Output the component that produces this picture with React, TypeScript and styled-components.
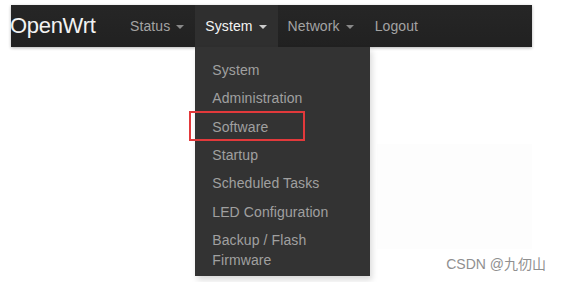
import React from "react";
import styled, { createGlobalStyle } from "styled-components";

const GlobalStyle = createGlobalStyle`
  html, body {
    margin: 0;
    padding: 0;
    background: #fff;
    font-family: "Liberation Sans", Arial, sans-serif;
  }
`;

const navItems = [
  { label: "Status", caret: true },
  { label: "System", caret: true, active: true },
  { label: "Network", caret: true },
  { label: "Logout", caret: false },
];

const systemMenu = [
  "System",
  "Administration",
  "Software",
  "Startup",
  "Scheduled Tasks",
  "LED Configuration",
  "Backup / Flash Firmware",
];

const App = () => {
  return (
    <Page>
      <GlobalStyle />
      <Navbar>
        <Brand>OpenWrt</Brand>
        <NavList>
          {navItems.map((item) => (
            <NavItem key={item.label} active={item.active}>
              {item.label}
              {item.caret && <Caret />}
              {item.active && (
                <Dropdown>
                  {systemMenu.map((entry) => (
                    <MenuItem key={entry} highlighted={entry === "Software"}>
                      {entry}
                    </MenuItem>
                  ))}
                </Dropdown>
              )}
            </NavItem>
          ))}
        </NavList>
      </Navbar>
      <Panel />
      <Watermark>CSDN @九仞山</Watermark>
    </Page>
  );
};

const Page = styled.div`
  position: relative;
  width: 561px;
  height: 282px;
  padding: 5px 0 0 11px;
  box-sizing: border-box;
  overflow: hidden;
`;

const Navbar = styled.nav`
  display: flex;
  align-items: stretch;
  width: 521px;
  height: 42px;
  background: linear-gradient(#262626, #212121);
  box-shadow: 0 1px 3px rgba(0, 0, 0, 0.3);
`;

const Brand = styled.div`
  display: flex;
  align-items: center;
  flex: 0 0 109px;
  margin-left: -1px;
  font-size: 22px;
  letter-spacing: -0.3px;
  color: #f2f2f2;
`;

const NavList = styled.ul`
  display: flex;
  margin: 0 0 0 1px;
  padding: 0;
  list-style: none;
`;

const NavItem = styled.li<{ active?: boolean }>`
  position: relative;
  display: flex;
  align-items: center;
  padding: 0 11px 0 10px;
  font-size: 14px;
  letter-spacing: 0.1px;
  color: ${(p) => (p.active ? "#f4f4f4" : "#a3a3a3")};
  background: ${(p) => (p.active ? "#2f2f2f" : "transparent")};
`;

const Caret = styled.span`
  display: inline-block;
  margin-left: 6px;
  margin-top: 2px;
  width: 0;
  height: 0;
  border-left: 4px solid transparent;
  border-right: 4px solid transparent;
  border-top: 4px solid currentColor;
  opacity: 0.8;
`;

const Dropdown = styled.ul`
  position: absolute;
  top: 42px;
  left: 0;
  width: 175px;
  margin: 0;
  padding: 9px 0 2px;
  list-style: none;
  background: #333;
  box-shadow: 2px 4px 6px rgba(0, 0, 0, 0.15);
`;

const MenuItem = styled.li<{ highlighted?: boolean }>`
  position: relative;
  padding: 4.15px 17px;
  line-height: 20px;
  font-size: 14px;
  letter-spacing: 0.1px;
  color: #a0a0a0;

  ${(p) =>
    p.highlighted &&
    `
    &::after {
      content: "";
      position: absolute;
      left: -6px;
      top: -2px;
      width: 112px;
      height: 26px;
      border: 2px solid #e2393b;
    }
  `}
`;

const Panel = styled.div`
  margin: 97px 0 0 366px;
  width: 155px;
  height: 105px;
  background: #fdfdfd;
`;

const Watermark = styled.div`
  position: absolute;
  right: 15px;
  bottom: 9px;
  font-family: "Liberation Sans", "Noto Sans CJK SC", sans-serif;
  font-size: 14px;
  color: #8f8f8f;
`;

export default App;
